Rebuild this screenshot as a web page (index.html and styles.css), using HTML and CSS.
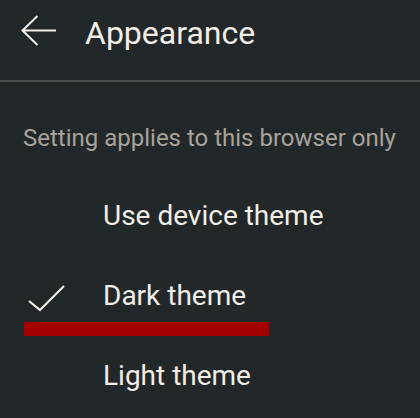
FILE: index.html
```html
<!DOCTYPE html>
<html>
<head>
<meta charset="utf-8">
<link rel="stylesheet" href="styles.css">
</head>
<body>
<div class="page">
  <header class="header">
    <svg class="back" width="36" height="32" viewBox="0 0 36 32">
      <path d="M35 15.5H1.5M16.5 1 1.5 15.5 16.5 30" fill="none" stroke="#f1ede6" stroke-width="2"/>
    </svg>
    <h1 class="title">Appearance</h1>
  </header>
  <p class="note">Setting applies to this browser only</p>
  <ul class="options">
    <li class="option"><span class="check"></span><span class="label">Use device theme</span></li>
    <li class="option selected">
      <span class="check">
        <svg width="37" height="32" viewBox="0 0 37 32"><path d="M1 21 12 30 36 6" fill="none" stroke="#f1ede6" stroke-width="2.2"/></svg>
      </span>
      <span class="label">Dark theme</span>
    </li>
    <li class="option"><span class="check"></span><span class="label">Light theme</span></li>
  </ul>
</div>
</body>
</html>
```
FILE: styles.css
```css
html, body {
  margin: 0;
  padding: 0;
  background: #222829;
}
.page {
  font-family: Roboto, "Noto Sans", sans-serif;
  color: #f1ede6;
  width: 420px;
  height: 418px;
  overflow: hidden;
}
.header {
  display: flex;
  align-items: flex-start;
  height: 80px;
  border-bottom: 2px solid #4a4d4d;
  box-sizing: content-box;
}
.back {
  margin-left: 21px;
  margin-right: 28px;
  margin-top: 15px;
}
.title {
  margin: 17px 0 0 0;
  font-size: 32px;
  font-weight: 400;
  line-height: 32px;
}
.note {
  margin: 0;
  padding: 41px 0 0 23px;
  font-size: 24px;
  line-height: 30px;
  color: #a8a29b;
}
.options {
  list-style: none;
  margin: 23px 0 0 0;
  padding: 0;
}
.option {
  position: relative;
  display: flex;
  align-items: center;
  height: 80px;
}
.check {
  width: 103px;
  height: 32px;
  display: flex;
  padding-left: 28px;
  box-sizing: border-box;
}
.label {
  font-size: 28px;
  line-height: 28px;
}
.selected::after {
  content: "";
  position: absolute;
  left: 24px;
  width: 245px;
  top: 66px;
  height: 14px;
  background: #a30000;
}
```
